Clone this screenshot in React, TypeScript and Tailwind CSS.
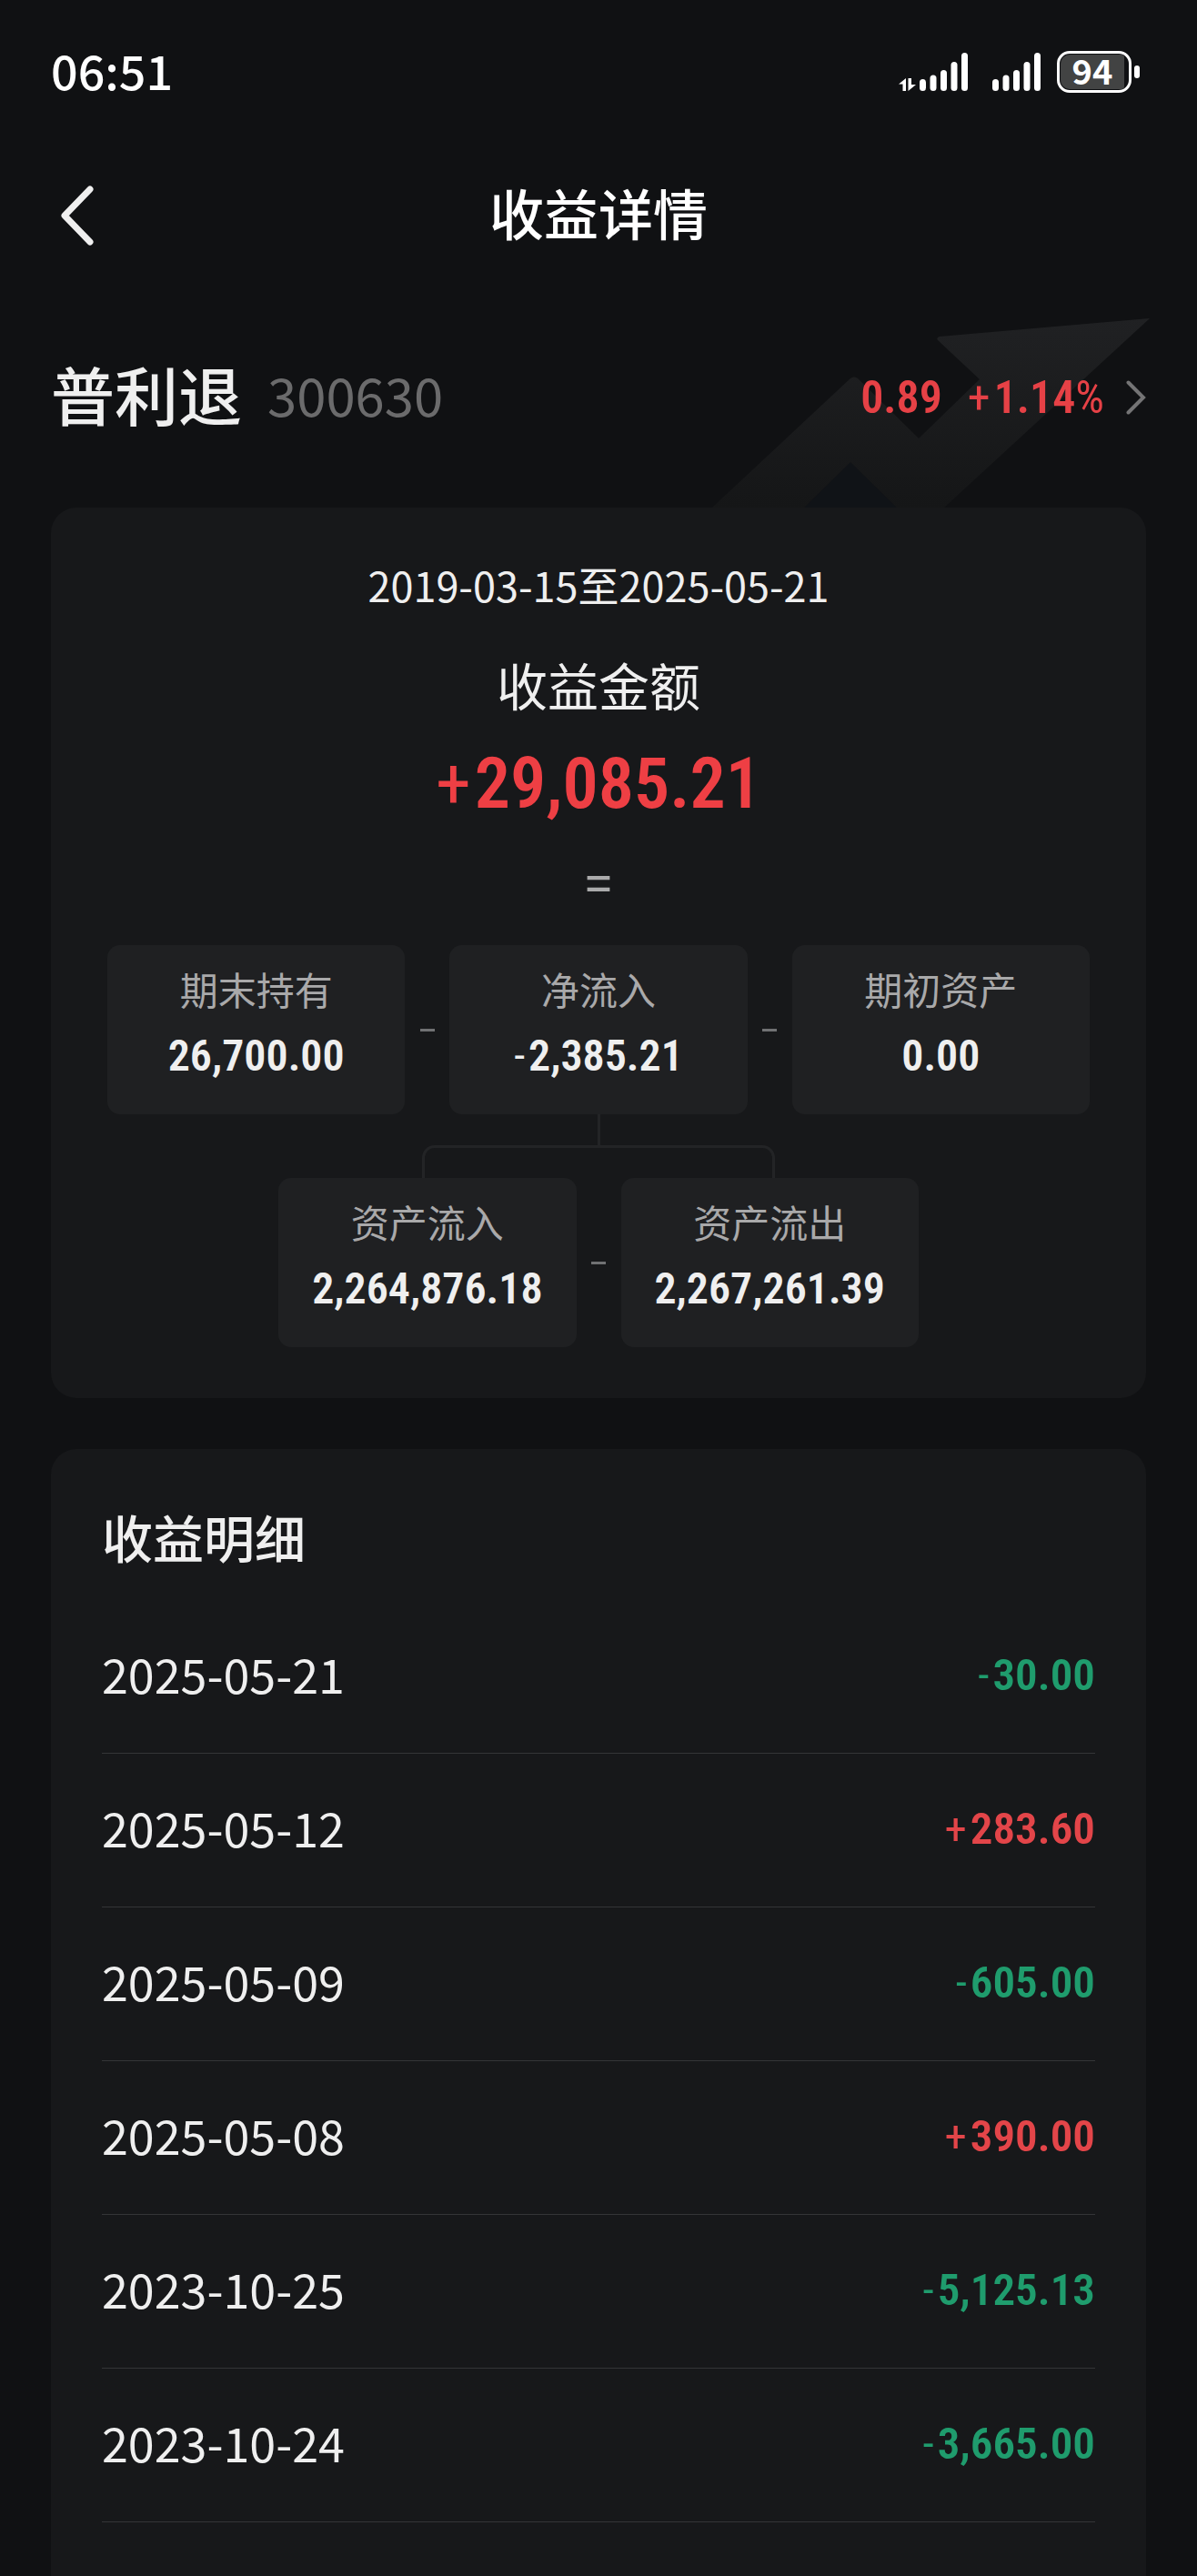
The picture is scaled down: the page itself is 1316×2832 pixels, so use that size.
interface AmountProps {
  value: string;
}

interface FlowCardProps {
  label: string;
  value: string;
}

const NUM = "font-['Roboto_Condensed',Roboto,sans-serif] font-semibold";

const records = [
  { date: "2025-05-21", amount: "-30.00" },
  { date: "2025-05-12", amount: "+283.60" },
  { date: "2025-05-09", amount: "-605.00" },
  { date: "2025-05-08", amount: "+390.00" },
  { date: "2023-10-25", amount: "-5,125.13" },
  { date: "2023-10-24", amount: "-3,665.00" },
];

// The sign is lighter than the digits
const Amount = ({ value }: AmountProps) => {
  const signed = value.startsWith("+") || value.startsWith("-");
  return (
    <>
      {signed && <span className="mr-1 font-normal">{value[0]}</span>}
      {signed ? value.slice(1) : value}
    </>
  );
};

const SignalBars = () => (
  <svg className="h-[42px] w-[53px]" viewBox="0 0 53 42" fill="white" aria-hidden="true">
    <rect x="0" y="29" width="7" height="13" rx="3.5" />
    <rect x="11.5" y="24.5" width="7" height="17.5" rx="3.5" />
    <rect x="23" y="19" width="7" height="23" rx="3.5" />
    <rect x="34.5" y="10" width="7" height="32" rx="3.5" />
    <rect x="46" y="0" width="7" height="42" rx="3.5" />
  </svg>
);

const StatusBar = () => (
  <div className="flex h-[158px] items-center justify-between pl-14 pr-[63px]">
    <span className="pb-1 text-[52px] leading-[64px] font-medium text-white">06:51</span>
    <div className="flex items-center">
      <svg className="mr-1 h-[42px] w-[19px]" viewBox="0 0 19 42" fill="white" aria-hidden="true">
        <path d="M8 28v14H4.500V34.500H0z" />
        <path d="M10.500 28H14v7h5L10.500 42z" />
      </svg>
      <SignalBars />
      <div className="w-[27px]" />
      <SignalBars />
      <div className="ml-[18px] flex h-[46px] w-[82px] rounded-[14px] border-[3px] border-white p-px">
        <div className="flex flex-1 items-center justify-center rounded-l-[10px] rounded-r-[3px] bg-[#424343] pb-1 text-[38px] leading-[40px] font-bold text-white">
          94
        </div>
        <div className="w-1" />
      </div>
      <div className="ml-[3px] h-[14px] w-[6px] rounded-full bg-white" />
    </div>
  </div>
);

const FlowCard = ({ label, value }: FlowCardProps) => (
  <div className="flex-1 rounded-[14px] bg-[#1f2022] pt-4 pb-8 text-center">
    <div className="text-[42px] leading-[64px] text-[#a9a9aa]">{label}</div>
    <div className={`${NUM} mt-2.5 text-[48px] leading-[64px]`}>
      <Amount value={value} />
    </div>
  </div>
);

const Minus = () => (
  <div className="flex w-[49px] items-center justify-center">
    <div className="h-[3px] w-4 bg-[#707173]" />
  </div>
);

const App = () => {
  return (
    <div className="flex min-h-screen flex-col bg-[#101113] font-['Noto_Sans_CJK_SC',sans-serif] text-[#efefef]">
      <StatusBar />

      <header className="grid h-[154px] grid-cols-[1fr_auto_1fr] items-center px-14">
        <button type="button" aria-label="返回" className="justify-self-start pt-1 pl-2.5">
          <svg className="h-[68px] w-[38px]" viewBox="0 0 38 68" fill="none" aria-hidden="true">
            <path d="M33 5L5 34l28 29" stroke="#efefef" strokeWidth="7" strokeLinecap="round" strokeLinejoin="round" />
          </svg>
        </button>
        <h1 className="pb-1 text-[60px] leading-[84px] font-medium text-white">收益详情</h1>
      </header>

      <section className="relative flex h-[246px] items-center justify-between px-14">
        <svg className="absolute right-[52px] bottom-0 h-[208px] w-[481px]" viewBox="0 0 481 208" aria-hidden="true">
          <defs>
            <linearGradient id="trend" x1="0" y1="0" x2="0" y2="1">
              <stop offset="0" stopColor="#202123" />
              <stop offset="1" stopColor="#151617" />
            </linearGradient>
          </defs>
          <path d="M101 208l51-50 51 50z" fill="#101317" />
          <path d="M481 0L250 20q-4 1-2 4l46 43-67 65-67-66q-4-3-8 0L0 208h101l51-50 51 50h52z" fill="url(#trend)" />
        </svg>
        <div className="relative flex items-center gap-7 pb-1">
          <h2 className="text-[70px] leading-[96px] font-medium">普利退</h2>
          <span className="text-[58px] leading-[84px] text-[#6b6b6c]">300630</span>
        </div>
        <a href="#quote" className={`${NUM} relative flex items-center pt-1 text-[50px] leading-[64px] text-[#e64146]`}>
          <span>0.89</span>
          <span className="ml-7">
            <Amount value="+1.14" />
            <span className="font-normal">%</span>
          </span>
          <svg className="ml-6 h-[38px] w-[22px]" viewBox="0 0 22 38" fill="none" aria-hidden="true">
            <path d="M2.500 2.500L19 19 2.500 35.500" stroke="#747475" strokeWidth="4" strokeLinecap="round" />
          </svg>
        </a>
      </section>

      <section className="mx-14 flex flex-col items-center rounded-[28px] bg-[#17181a] px-[62px] pt-[54px] pb-14">
        <p className="text-[45px] leading-[62px]">2019-03-15至2025-05-21</p>
        <h3 className="mt-9 text-[56px] leading-[84px]">收益金额</h3>
        <p className={`${NUM} mt-6 text-[78px] leading-[88px] text-[#ee3f44]`}>
          <Amount value="+29,085.21" />
        </p>
        <div className="mt-[38px] text-[50px] leading-[48px] font-medium text-[#aaaaab]">=</div>

        <div className="mt-[47px] flex w-full">
          <FlowCard label="期末持有" value="26,700.00" />
          <Minus />
          <FlowCard label="净流入" value="-2,385.21" />
          <Minus />
          <FlowCard label="期初资产" value="0.00" />
        </div>

        <div className="h-[34px] w-[3px] bg-[#232426]" />
        <div className="h-9 w-[36%] rounded-t-[14px] border-[3px] border-b-0 border-[#232426]" />

        <div className="flex w-[calc((200%-49px)/3)]">
          <FlowCard label="资产流入" value="2,264,876.18" />
          <Minus />
          <FlowCard label="资产流出" value="2,267,261.39" />
        </div>
      </section>

      <section className="mx-14 mt-14 flex-1 rounded-t-[28px] bg-[#17181a] px-14 pt-[54px]">
        <h3 className="mb-7 text-[56px] leading-[84px] font-medium">收益明细</h3>
        <ul>
          {records.map((item) => (
            <li key={item.date} className="flex h-[169px] items-center justify-between border-b border-[#343537] pb-0.5">
              <span className="pb-1 text-[52px] leading-[64px]">{item.date}</span>
              <span
                className={`${NUM} text-[49px] leading-[64px] ${
                  item.amount.startsWith("+") ? "text-[#e34549]" : "text-[#1f9c6d]"
                }`}
              >
                <Amount value={item.amount} />
              </span>
            </li>
          ))}
        </ul>
      </section>
    </div>
  );
};

export default App;
